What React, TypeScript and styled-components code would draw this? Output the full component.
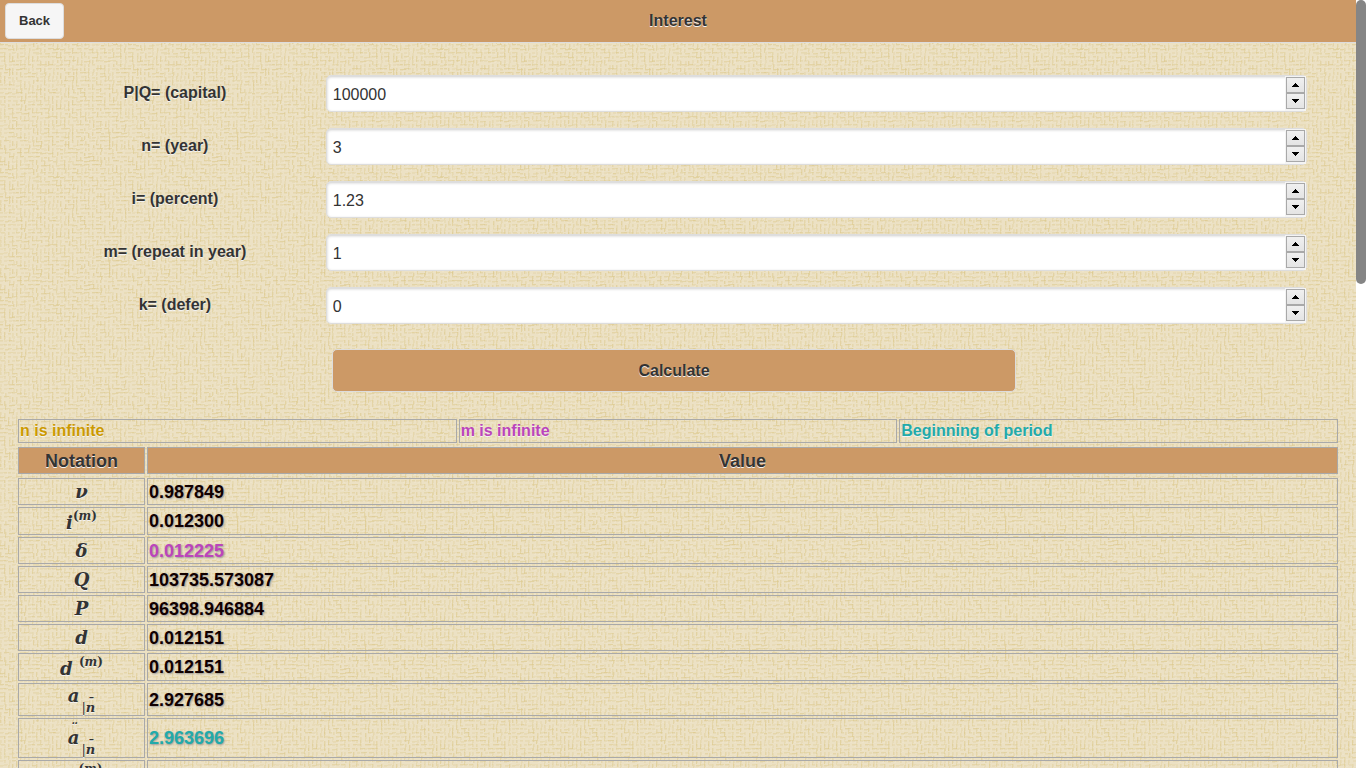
import React, { useId, useState } from "react";
import styled, { createGlobalStyle } from "styled-components";

// Woven canvas tile: short threads running both ways, laid out by a seeded generator.
const weaveTile = (() => {
  let seed = 7;
  const rnd = () => {
    seed = (seed * 16807) % 2147483647;
    return seed / 2147483647;
  };
  const size = 128;
  const thread = (x: number, y: number, w: number, h: number, c: string, o: string) =>
    `<rect x='${x}' y='${y}' width='${w}' height='${h}' fill='${c}' fill-opacity='${o}'/>`;
  let out = "";
  for (let y = 0; y < size; y += 4) {
    for (let x = 0; x < size; x += 4) {
      const o = (0.2 + rnd() * 0.45).toFixed(2);
      const jx = x + (rnd() < 0.25 ? 1 : 0);
      const jy = y + (rnd() < 0.25 ? 1 : 0);
      if (rnd() < 0.5) {
        out += thread(jx, jy, 1, 3 + Math.floor(rnd() * 4), "#ddca8e", o);
        out += thread(jx + 1, jy, 1, 3, "#dfcf9c", "0.3");
      } else {
        out += thread(jx, jy, 3 + Math.floor(rnd() * 4), 1, "#ddca8e", o);
        out += thread(jx, jy + 1, 3, 1, "#dfcf9c", "0.3");
      }
      if (rnd() < 0.4) out += thread(jx + 2, jy + 2, 2, 1, "#f0e7cf", "0.5");
    }
  }
  const svg = `<svg xmlns='http://www.w3.org/2000/svg' width='${size}' height='${size}'><rect width='${size}' height='${size}' fill='#ece1c4'/>${out}</svg>`;
  return `url("data:image/svg+xml,${encodeURIComponent(svg).replace(/'/g, "%27")}")`;
})();

const color = {
  bar: "#cc9966",
  ink: "#333333",
  line: "#a9a9a9",
  edge: "#dddddd",
  gold: "#cc9900",
  magenta: "#bb44bb",
  teal: "#22aaaa",
  value: "#110000",
};

const GlobalStyle = createGlobalStyle`
  *, *::before, *::after { box-sizing: border-box; }
  body {
    margin: 0;
    background: #fff;
    color: ${color.ink};
    font-family: "Liberation Sans", Arial, Helvetica, sans-serif;
    font-size: 16px;
    line-height: 20px;
    text-shadow: 0 1px 0 #f3f3f3;
  }
`;

const Shell = styled.div`
  display: flex;
  height: 100vh;
`;

const Page = styled.div`
  flex: 1;
  min-width: 0;
  overflow-y: auto;
  scrollbar-width: none;
  background: ${weaveTile};
`;

const ScrollTrack = styled.div`
  width: 10px;
  background: #fff;
`;

const ScrollThumb = styled.div`
  height: 37%;
  border-radius: 5px;
  background: #858585;
`;

const Header = styled.header`
  display: grid;
  grid-template-columns: 64px 1fr 69px;
  align-items: center;
  height: 43px;
  padding-left: 5px;
  background: ${color.bar};
  border-bottom: 1px solid ${color.edge};
`;

const Title = styled.h1`
  margin: 0;
  font-size: 16px;
  line-height: 20px;
  text-align: center;
`;

const BackButton = styled.button`
  justify-self: start;
  padding: 9px 13px;
  border: 1px solid ${color.edge};
  border-radius: 4px;
  background: #f6f6f6;
  color: ${color.ink};
  font: bold 13px/16px "Liberation Sans", Arial, sans-serif;
  text-shadow: inherit;
  cursor: pointer;
`;

const Content = styled.main`
  padding: 32px 16px 16px;
`;

const Form = styled.form`
  display: grid;
  row-gap: 16px;
`;

const FieldRow = styled.div`
  display: grid;
  grid-template-columns: 24% 73.5%;
  align-items: start;
`;

const Label = styled.label`
  padding-top: 8px;
  font-weight: bold;
  text-align: center;
`;

const NumberBox = styled.div`
  display: flex;
  height: 37px;
  margin-left: -8px;
  border: 1px solid ${color.edge};
  border-radius: 5px;
  background: #fff;
  box-shadow: inset 0 1px 3px rgba(0, 0, 0, 0.2);
`;

const NumberInput = styled.input`
  flex: 1;
  min-width: 0;
  padding: 2px 6px 0;
  border: 0;
  background: transparent;
  color: ${color.ink};
  font: 16px/20px "Liberation Sans", Arial, sans-serif;
  outline: none;
  appearance: textfield;

  &::-webkit-inner-spin-button {
    display: none;
  }
`;

const Spinner = styled.div`
  display: flex;
  flex-direction: column;
  width: 21px;
  padding: 1px 1px 2px;
  background: #f4f4f4;
`;

const StepButton = styled.button`
  display: flex;
  flex: 1;
  align-items: center;
  justify-content: center;
  padding: 0;
  border: 1px solid ${color.line};
  background: linear-gradient(#f0f0f0, #e4e4e4);
`;

const Calculate = styled.button`
  width: 51.6%;
  height: 43px;
  margin: 9px 0 0 23.9%;
  border: 1px solid ${color.edge};
  border-radius: 5px;
  background: ${color.bar};
  color: ${color.ink};
  font: bold 16px/20px "Liberation Sans", Arial, sans-serif;
  text-shadow: inherit;
  cursor: pointer;
`;

const Table = styled.table`
  width: 100%;
  border-collapse: separate;
  border-spacing: 2px;
  table-layout: fixed;
`;

const LegendTable = styled(Table)`
  margin-top: 25px;
`;

const LegendCell = styled.td<{ $tone: string }>`
  height: 24px;
  padding: 1px;
  border: 1px solid ${color.line};
  color: ${(p) => p.$tone};
  font-weight: bold;
`;

// The empty first row doubles the spacing between head and body.
const ResultBody = styled.tbody`
  &::before {
    content: "";
    display: table-row;
  }
`;

const HeadCell = styled.th<{ $narrow?: boolean }>`
  width: ${(p) => (p.$narrow ? "127px" : "auto")};
  height: 27px;
  padding: 0;
  border: 1px solid ${color.line};
  background: ${color.bar};
  font-size: 18px;
  font-weight: bold;
  line-height: 24px;
`;

const NotationCell = styled.th<{ $height: number }>`
  height: ${(p) => p.$height}px;
  padding: 0;
  border: 1px solid ${color.line};
  font: italic bold 18px/20px "DejaVu Serif", serif;
  text-align: center;
`;

const ValueCell = styled.td<{ $tone?: string }>`
  padding: 1px;
  border: 1px solid ${color.line};
  color: ${(p) => p.$tone ?? color.value};
  font-size: 18px;
  font-weight: bold;
  text-shadow: 1px 1px 2px #999;
`;

const Symbol = styled.span`
  display: flex;
  align-items: flex-end;
  justify-content: center;
`;

const Sup = styled.span`
  margin-bottom: 10px;
  font-size: 12px;
  font-style: normal;
  line-height: 14px;
`;

const Stack = styled.span`
  display: flex;
  flex-direction: column;
  align-items: center;
`;

const Base = styled(Stack)`
  align-self: flex-start;
  line-height: 24px;
`;

const Sub = styled.span<{ $under?: boolean }>`
  display: flex;
  align-items: flex-end;
  margin: ${(p) => (p.$under ? 19 : 12)}px 0 0 2px;
  font-size: 13px;
  line-height: 14px;
`;

const Bar = styled.span`
  font-style: normal;
  font-weight: normal;
`;

const Macron = styled.span`
  height: 5px;
`;

const Dots = styled.span`
  height: 7px;
  font-size: 13px;
  line-height: 18px;
`;

const Arrow = ({ down = false }: { down?: boolean }) => (
  <svg width="7" height="4" viewBox="0 0 7 4" shapeRendering="crispEdges" aria-hidden="true">
    <path d={down ? "M0 0h7v1H0zM1 1h5v1H1zM2 2h3v1H2zM3 3h1v1H3z" : "M3 0h1v1H3zM2 1h3v1H2zM1 2h5v1H1zM0 3h7v1H0z"} />
  </svg>
);

const Field = ({ label, initial }: { label: string; initial: string }) => {
  const id = useId();
  const [value, setValue] = useState(initial);
  const step = (by: number) => setValue(String(Number((Number(value) + by).toFixed(6))));
  return (
    <FieldRow>
      <Label htmlFor={id}>{label}</Label>
      <NumberBox>
        <NumberInput id={id} type="number" step="any" value={value} onChange={(e) => setValue(e.target.value)} />
        <Spinner>
          <StepButton type="button" aria-label="Increase" onClick={() => step(1)}>
            <Arrow />
          </StepButton>
          <StepButton type="button" aria-label="Decrease" onClick={() => step(-1)}>
            <Arrow down />
          </StepButton>
        </Spinner>
      </NumberBox>
    </FieldRow>
  );
};

const PerPeriod = () => (
  <Sup>
    (<i>m</i>)
  </Sup>
);

const Annuity = ({ due = false }: { due?: boolean }) => (
  <Symbol>
    <Base>
      {due && <Dots>¨</Dots>}
      <span>a</span>
    </Base>
    <Sub $under={due}>
      <Bar>|</Bar>
      <Stack>
        <Macron>¯</Macron>
        <span>n</span>
      </Stack>
    </Sub>
  </Symbol>
);

const fields = [
  { label: "P|Q= (capital)", initial: "100000" },
  { label: "n= (year)", initial: "3" },
  { label: "i= (percent)", initial: "1.23" },
  { label: "m= (repeat in year)", initial: "1" },
  { label: "k= (defer)", initial: "0" },
];

type Result = { notation: React.ReactNode; value: string; height: number; tone?: string };

const results: Result[] = [
  { notation: "ν", value: "0.987849", height: 27 },
  { notation: <Symbol>i<PerPeriod /></Symbol>, value: "0.012300", height: 28 },
  { notation: "δ", value: "0.012225", height: 27, tone: color.magenta },
  { notation: "Q", value: "103735.573087", height: 27 },
  { notation: "P", value: "96398.946884", height: 27 },
  { notation: "d", value: "0.012151", height: 27 },
  { notation: <Symbol>d&nbsp;<PerPeriod /></Symbol>, value: "0.012151", height: 28 },
  { notation: <Annuity />, value: "2.927685", height: 33 },
  { notation: <Annuity due />, value: "2.963696", height: 40, tone: color.teal },
  { notation: <Symbol>a&nbsp;<PerPeriod /></Symbol>, value: "", height: 27 },
];

export default function App() {
  return (
    <>
      <GlobalStyle />
      <Shell>
        <Page>
          <Header>
            <BackButton type="button">Back</BackButton>
            <Title>Interest</Title>
          </Header>
          <Content>
            <Form onSubmit={(e) => e.preventDefault()}>
              {fields.map((f) => (
                <Field key={f.label} {...f} />
              ))}
              <Calculate type="submit">Calculate</Calculate>
            </Form>
            <LegendTable>
              <tbody>
                <tr>
                  <LegendCell $tone={color.gold}>n is infinite</LegendCell>
                  <LegendCell $tone={color.magenta}>m is infinite</LegendCell>
                  <LegendCell $tone={color.teal}>Beginning of period</LegendCell>
                </tr>
              </tbody>
            </LegendTable>
            <Table>
              <thead>
                <tr>
                  <HeadCell scope="col" $narrow>Notation</HeadCell>
                  <HeadCell scope="col">Value</HeadCell>
                </tr>
              </thead>
              <ResultBody>
                {results.map((r, i) => (
                  <tr key={i}>
                    <NotationCell scope="row" $height={r.height}>{r.notation}</NotationCell>
                    <ValueCell $tone={r.tone}>{r.value}</ValueCell>
                  </tr>
                ))}
              </ResultBody>
            </Table>
          </Content>
        </Page>
        <ScrollTrack>
          <ScrollThumb />
        </ScrollTrack>
      </Shell>
    </>
  );
}
